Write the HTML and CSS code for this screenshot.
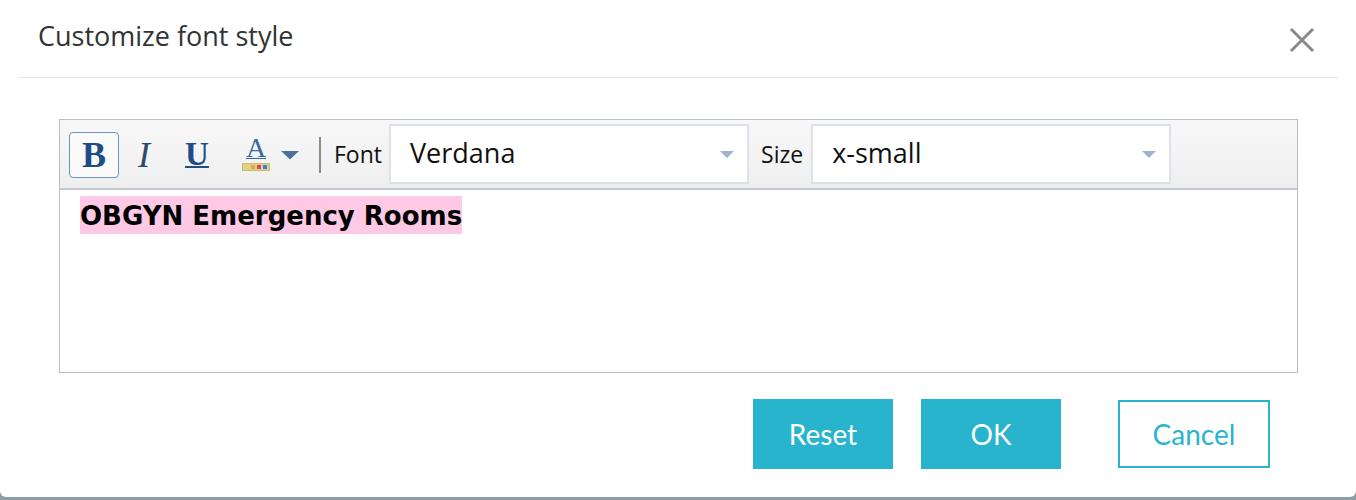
FILE: index.html
```html
<!DOCTYPE html>
<html>
<head>
<meta charset="utf-8">
<link rel="stylesheet" href="styles.css">
</head>
<body>
<div class="dialog">
  <div class="header">
    <div class="title">Customize font style</div>
    <div class="close" aria-label="close">
      <svg width="26" height="26" viewBox="0 0 26 26"><path d="M2 2 L24 24 M24 2 L2 24" stroke="#8a8a8a" stroke-width="3" fill="none"/></svg>
    </div>
  </div>
  <div class="body">
    <div class="editor">
      <div class="toolbar">
        <div class="tbtn active"><span class="g gb">B</span></div>
        <div class="tbtn small ti"><span class="g gi">I</span></div>
        <div class="tbtn small tu"><span class="g gu">U</span></div>
        <div class="acol">
          <span class="ga">A</span>
          <svg class="abar" width="28" height="8" viewBox="0 0 28 8">
            <rect x="0.5" y="0.5" width="27" height="7" fill="#d9d2a0" stroke="#c9bd6a"/>
            <rect x="3" y="2" width="4" height="4" fill="#f2d64a"/>
            <rect x="9" y="2" width="4" height="4" fill="#e8a83a"/>
            <rect x="15" y="2" width="4" height="4" fill="#e2463e"/>
            <rect x="21" y="2" width="4" height="4" fill="#3f7fe0"/>
          </svg>
        </div>
        <svg class="darrow" width="18" height="9" viewBox="0 0 18 9"><path d="M0 0 L18 0 L9 8.5 Z" fill="#4d7199"/></svg>
        <div class="sep"></div>
        <span class="lbl">Font</span>
        <div class="select sel-font"><span>Verdana</span><svg width="14" height="8" viewBox="0 0 14 8"><path d="M0 0 L14 0 L7 7 Z" fill="#9fb3cf"/></svg></div>
        <span class="lbl lbl-size">Size</span>
        <div class="select sel-size"><span>x-small</span><svg width="14" height="8" viewBox="0 0 14 8"><path d="M0 0 L14 0 L7 7 Z" fill="#9fb3cf"/></svg></div>
      </div>
      <div class="content"><span class="hl">OBGYN Emergency Rooms</span></div>
    </div>
    <div class="actions">
      <button class="btn solid">Reset</button>
      <button class="btn solid ok">OK</button>
      <button class="btn outline">Cancel</button>
    </div>
  </div>
</div>
<div class="backdrop"></div>
</body>
</html>
```
FILE: styles.css
```css
html, body { margin: 0; padding: 0; }
body {
  width: 1356px;
  height: 500px;
  overflow: hidden;
  background: #8d9aa3;
  font-family: "Open Sans", Lato, sans-serif;
}
.dialog {
  height: 497px;
  background: #fff;
  border-radius: 0 0 6px 6px;
  box-sizing: border-box;
}
.backdrop {
  height: 3px;
  background: #8f9ca4;
}
.header {
  margin: 0 18px;
  height: 78px;
  border-bottom: 1px solid #dce7f0;
  box-sizing: border-box;
  display: flex;
  align-items: center;
  justify-content: space-between;
  padding: 0 23px 0 20px;
}
.title {
  font-size: 27px;
  color: #333;
  padding-bottom: 6px;
}
.close { display: flex; margin-top: 2px; }
.body {
  padding: 41px 58px 0 59px;
}
.editor {
  border: 1px solid #b8bccb;
  height: 254px;
  box-sizing: border-box;
  display: flex;
  flex-direction: column;
}
.toolbar {
  height: 70px;
  box-sizing: border-box;
  border-bottom: 2px solid #c4c8d4;
  background: linear-gradient(#f8f8f8, #efefef);
  display: flex;
  align-items: center;
  padding-left: 9px;
}
.tbtn {
  width: 50px;
  height: 46px;
  box-sizing: border-box;
  border: 1px solid transparent;
  border-radius: 4px;
  display: flex;
  align-items: center;
  justify-content: center;
  margin-top: 1px;
}
.tbtn.small { width: 36px; }
.tbtn.ti { margin-left: 7px; }
.tbtn.tu { margin-left: 17px; }
.tbtn.active {
  border: 1.5px solid #6f92b8;
  background: #fafafa;
}
.g {
  font-family: "Liberation Serif", serif;
  color: #1f4c84;
  font-size: 36px;
  line-height: 1;
}
.gb { font-weight: bold; }
.gi { font-style: italic; color: #2c4a70; }
.gu {
  font-size: 33px;
  font-weight: bold;
  text-decoration: underline;
  text-decoration-thickness: 2px;
  text-underline-offset: 1px;
}
.acol {
  display: flex;
  flex-direction: column;
  align-items: center;
  width: 28px;
  margin-left: 27px;
}
.ga {
  font-family: "Liberation Serif", serif;
  color: #3a6aa6;
  font-size: 28px;
  line-height: 22px;
  text-decoration: underline;
  text-decoration-thickness: 1px;
  text-underline-offset: 1px;
}
.abar { margin-top: 4px; }
.darrow { margin-left: 11px; margin-top: 2px; }
.sep {
  width: 2px;
  height: 36px;
  background: #8c8c8c;
  margin: 2px 0 0 20px;
}
.lbl {
  font-size: 23px;
  color: #111;
  margin-left: 13px;
  margin-right: 7px;
}
.lbl-size { margin-left: 12px; margin-right: 8px; }
.select {
  width: 360px;
  height: 60px;
  box-sizing: border-box;
  border: 2px solid #dde1ea;
  background: #fff;
  display: flex;
  align-items: center;
  justify-content: space-between;
  padding: 0 13px 0 19px;
}
.select span {
  font-size: 27px;
  color: #111;
  margin-top: -3px;
}
.select svg { margin-top: 2px; }
.content {
  flex: 1;
  background: #fff;
  padding: 6px 20px;
}
.hl {
  font-family: Verdana, "DejaVu Sans", sans-serif;
  font-weight: bold;
  font-size: 26px;
  background: #fdc9e4;
  color: #000;
  line-height: 35px;
  padding-top: 3px;
  display: inline-block;
}
.actions {
  display: flex;
  justify-content: flex-end;
  margin-top: 26px;
  padding-right: 28px;
}
.btn {
  font-family: Lato, "Open Sans", sans-serif;
  font-size: 28px;
  height: 70px;
  box-sizing: border-box;
  border: none;
  padding: 0;
  cursor: pointer;
}
.btn.solid {
  width: 140px;
  background: #29b4cd;
  color: #fff;
}
.btn.ok { margin-left: 28px; }
.btn.outline {
  width: 152px;
  margin-left: 57px;
  margin-top: 1px;
  height: 68px;
  background: #fff;
  color: #29b4cd;
  border: 2px solid #29b4cd;
}
```
